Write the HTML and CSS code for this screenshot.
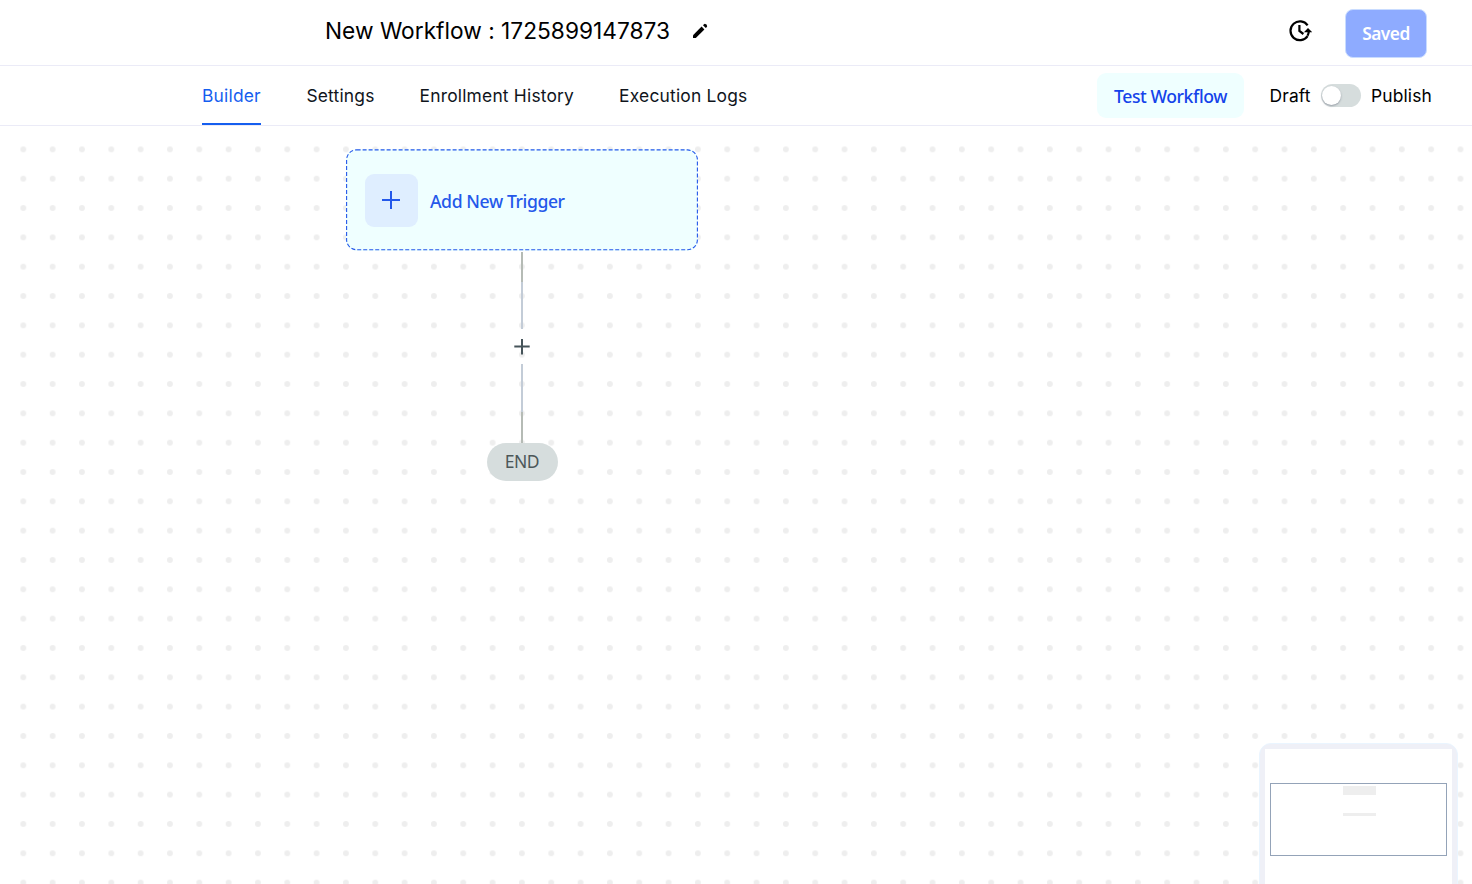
FILE: index.html
```html
<!DOCTYPE html>
<html lang="en">
<head>
<meta charset="utf-8">
<title>New Workflow</title>
<link rel="stylesheet" href="styles.css">
</head>
<body>
<header class="topbar">
  <div class="title-group">
    <h1 class="title">New Workflow : 1725899147873</h1>
    <svg class="pencil" width="16" height="16" viewBox="0 0 16 16"><path d="M1 12.2 9.6 3.6l2.8 2.8L3.8 15H1z"/><path d="m11 2.2 1-1q.9-.8 1.8 0l1 1q.8.9 0 1.8l-1 1z"/></svg>
  </div>
  <div class="top-actions">
    <svg class="history" width="24" height="24" viewBox="0 0 24 24"><path d="M19.6 6.4A9.4 9.4 0 1 0 19.6 17.2" /><path d="M11.4 6v6l4 3"/><path class="solid" d="m20 8.9 4.2 4.4h-2.4q-.3 2.2-1.3 4l-2-1.1q.9-1.3 1.1-2.9h-3.7z"/></svg>
    <button class="saved">Saved</button>
  </div>
</header>
<nav class="tabbar">
  <div class="tabs">
    <a class="tab active">Builder</a>
    <a class="tab settings">Settings</a>
    <a class="tab enrollment">Enrollment History</a>
    <a class="tab logs">Execution Logs</a>
  </div>
  <div class="tab-actions">
    <button class="test"><span>Test Workflow</span></button>
    <span class="draft">Draft</span>
    <span class="switch"><span class="knob"></span></span>
    <span class="publish">Publish</span>
  </div>
</nav>
<main class="canvas">
  <svg class="dots" width="1472" height="758"><defs><pattern id="dot" x="8.7" y="8.7" width="29.33" height="29.33" patternUnits="userSpaceOnUse"><circle cx="14.6" cy="14.6" r="2.95" fill="#eee"/></pattern></defs><rect width="1472" height="758" fill="url(#dot)"/></svg>
  <svg class="edges" width="20" height="192" viewBox="0 0 20 192"><path class="edge-end" d="M10 0v30M10 160v31"/><path class="edge-mid" d="M10 30v47M10 112v48"/><path class="add" d="M2.3 94.5h15.4M10 87v15.4"/></svg>
  <div class="trigger">
    <svg class="outline" width="352" height="102"><rect x=".6" y=".9" width="350.8" height="99.8" rx="10"/></svg>
    <span class="plus"><svg width="18" height="18"><path d="M0 9h18M9 0v18"/></svg></span>
    <span class="trigger-label">Add New Trigger</span>
  </div>
  <div class="end">END</div>
  <div class="minimap"><div class="map-inner"><div class="viewport"><i class="map-node"></i><i class="map-node small"></i></div></div></div>
</main>
</body>
</html>
```
FILE: styles.css
```css
* { box-sizing: border-box; }
body { margin: 0; width: 1472px; height: 884px; overflow: hidden; background: #fff; color: #000; font-family: Inter, sans-serif; }
button { border: 0; padding: 0; }
.topbar { height: 66px; border-bottom: 1px solid #ebebf7; display: flex; justify-content: space-between; padding: 0 45px 0 325px; }
.title-group { display: flex; align-items: center; height: 62px; gap: 22px; }
.title { margin: 0; font-size: 22.7px; font-weight: 400; line-height: 30px; white-space: nowrap; width: 345px; letter-spacing: 0.01px; }
.top-actions { display: flex; align-items: flex-start; gap: 33px; }
.history { margin-top: 19px; fill: none; stroke: #000; stroke-width: 2.2; }
.solid { fill: #000; stroke: none; }
.saved { width: 82px; height: 49px; margin-top: 9px; border: 1px solid #c9dcff; border-radius: 8px; background: #8eabff; color: #fff; font: 600 17.3px/47px "Noto Sans", sans-serif; letter-spacing: -.5px; padding-bottom: 1px; }
.tabbar { height: 60px; border-bottom: 1px solid #ebebf7; display: flex; justify-content: space-between; padding: 0 40px 0 202px; }
.tabs { display: flex; gap: 45px; }
.tab { font-size: 17.4px; line-height: 60px; height: 59px; white-space: nowrap; color: #10151c; letter-spacing: .2px; }
.active { color: #155eef; border-bottom: 2px solid #155eef; width: 59px; }
.settings { margin-left: .4px; }
.tab-actions { display: flex; align-items: center; font-size: 17.4px; letter-spacing: .15px; }
.test { width: 147px; height: 45px; border-radius: 9px; background: #efffff; color: #1443ea; font: 500 17.6px/46px "Noto Sans", sans-serif; margin-right: 25.5px; white-space: nowrap; letter-spacing: -.43px; }
.draft { width: 51.5px; }
.switch { width: 40px; height: 23px; border-radius: 12px; background: #d6dddd; padding: 2px 1px; }
.knob { display: block; width: 19px; height: 19px; border-radius: 50%; background: #fff; box-shadow: 0 1px 2px #6b728099; }
.publish { width: 61px; margin-left: 10px; }
.canvas { position: relative; height: 758px; overflow: hidden; }
.dots { display: block; }
.trigger { position: absolute; left: 346px; top: 23px; width: 352px; height: 102px; padding: 0 19px; display: flex; align-items: center; gap: 12px; border-radius: 10px; background: #efffff; }
.outline { position: absolute; left: 0; top: 0; fill: none; stroke: #2458ea; stroke-width: 1.1; stroke-dasharray: 4 2; }
.plus { width: 53px; height: 53px; border-radius: 9px; background: #dfeeff; display: flex; align-items: center; justify-content: center; padding: 0 1px 1px 0; }
.plus path { stroke: #2458ea; stroke-width: 2; }
.trigger-label { color: #2458ea; font: 500 17.6px/26px "Noto Sans", sans-serif; white-space: nowrap; letter-spacing: -.4px; padding-top: 1px; }
.edges { position: absolute; left: 512px; top: 126px; fill: none; stroke-width: 2; }
.edge-end { stroke: #b5bbb5; }
.edge-mid { stroke: #c3ccd7; }
.add { stroke: #46545a; }
.end { position: absolute; left: 486.5px; top: 316.5px; width: 71px; height: 38px; border-radius: 19px; background: #d6dddd; color: #4c5759; text-align: center; font: 400 17.5px/37px "Noto Sans", sans-serif; letter-spacing: -.5px; }
.minimap { position: absolute; left: 1259px; top: 617px; width: 199px; height: 160px; padding: 6px; border: 1px solid #eaf5ff; border-radius: 12px; background: #eff0f7; }
.map-inner { height: 150px; background: #fff; padding: 34px 5px; margin: -1px; }
.viewport { width: 177px; height: 73px; border: 1px solid #94a3b8; display: flex; flex-direction: column; align-items: center; padding: 2px 0 0 1px; gap: 18px; }
.map-node { width: 33px; height: 9px; background: #eee; }
.small { height: 3px; }
```
